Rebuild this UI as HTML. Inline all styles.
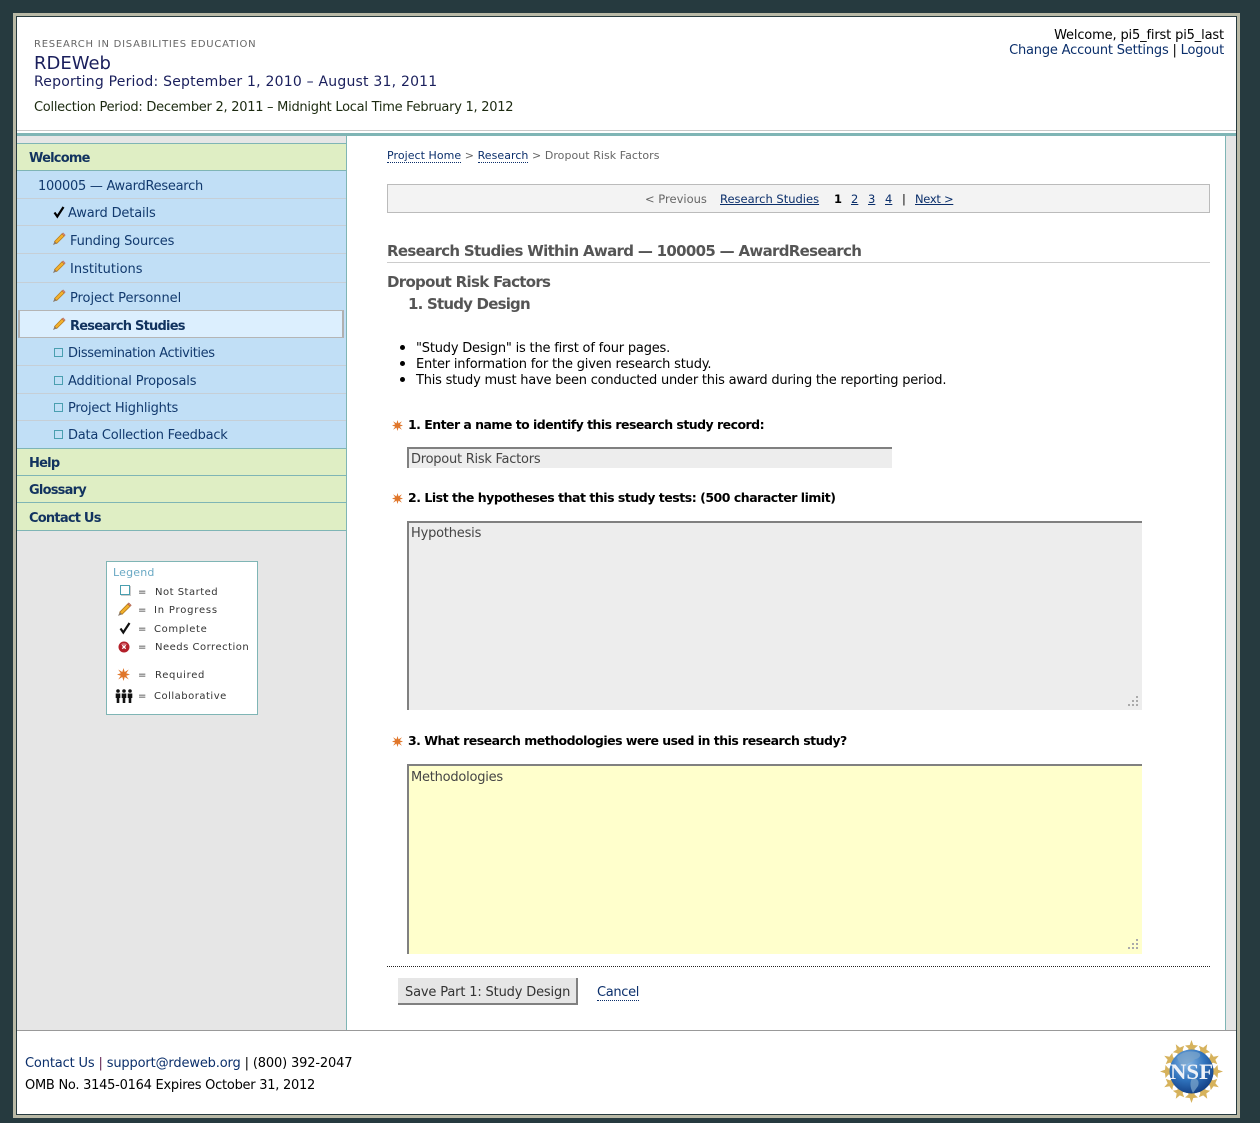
<!DOCTYPE html>
<html><head><meta charset="utf-8"><title>RDEWeb</title>
<style>
html,body{margin:0;padding:0;background:#263a3f}
body{position:relative;width:1260px;height:1123px;overflow:hidden;font-family:"DejaVu Sans","Liberation Sans",sans-serif;font-size:13px;color:#000}
.b{position:absolute}
.t{position:absolute;white-space:nowrap;line-height:16px;height:16px}
a{color:#0b2f6b;text-decoration:none}
.dl{border-bottom:1px dotted #0b2f6b;line-height:13px;display:inline-block}
.u{text-decoration:underline}
.n{color:#123a6e}
.g{font-weight:bold;color:#12335f;letter-spacing:-.78px}
.h{font-weight:bold;color:#555;letter-spacing:-.7px}
.q{font-weight:bold;color:#000;font-size:12.500px}
.l{font-size:10px;color:#333;letter-spacing:.5px}
svg{position:absolute;overflow:visible}
</style></head><body>
<div class="b" style="left:13px;top:13px;width:1227px;height:1105px;background:#b9b9a6"></div>
<div class="b" style="left:16px;top:16px;width:1221px;height:1099px;background:#263a3f"></div>
<div class="b" style="left:17px;top:17px;width:1219px;height:1097px;background:#fff"></div>
<div class="b" style="left:17px;top:130px;width:1219px;height:1px;background:#c8c8c8"></div>
<div class="b" style="left:17px;top:133px;width:1219px;height:3px;background:#7fb5b5"></div>
<div class="b" style="left:17px;top:136px;width:329px;height:894px;background:#e6e6e6"></div>
<div class="b" style="left:346px;top:136px;width:1px;height:894px;background:#7fb5b5"></div>
<div class="b" style="left:1225px;top:136px;width:1px;height:894px;background:#7fb5b5"></div>
<div class="b" style="left:1226px;top:136px;width:10px;height:894px;background:#e6e6e6"></div>
<div class="b" style="left:17px;top:1030px;width:1219px;height:1px;background:#999"></div>

<span class="t" style="left:34px;top:37px;font-size:10px;color:#666;letter-spacing:.76px">RESEARCH IN DISABILITIES EDUCATION</span>
<span class="t" style="left:34px;top:55px;font-size:18px;line-height:18px;height:18px;color:#1a1f5c">RDEWeb</span>
<span class="t" style="left:34px;top:74px;font-size:14px;color:#1a1f5c;letter-spacing:.21px">Reporting Period: September 1, 2010 – August 31, 2011</span>
<span class="t" style="left:34px;top:100px;color:#1c2a10;letter-spacing:-.27px">Collection Period: December 2, 2011 – Midnight Local Time February 1, 2012</span>
<span class="t" style="right:36px;top:28px;letter-spacing:-.15px">Welcome, pi5_first pi5_last</span>
<span class="t" style="right:36px;top:43px;letter-spacing:-.19px"><a>Change Account Settings</a> | <a>Logout</a></span>

<!-- sidebar -->
<div class="b" style="left:17px;top:143px;width:329px;height:26px;background:#dfeec4;border-top:1px solid #7fb5b5;border-bottom:1px solid #7fb5b5"></div>
<div class="b" style="left:17px;top:171px;width:329px;height:277px;background:#c1dff6"></div>
<div class="b" style="left:17px;top:198px;width:329px;height:1px;background:#c6cfd6"></div>
<div class="b" style="left:17px;top:225px;width:329px;height:1px;background:#c6cfd6"></div>
<div class="b" style="left:17px;top:253px;width:329px;height:1px;background:#c6cfd6"></div>
<div class="b" style="left:17px;top:282px;width:329px;height:1px;background:#c6cfd6"></div>
<div class="b" style="left:18px;top:310px;width:326px;height:28px;background:#dceffe;border:1px solid #b5b5b5;border-left:2px solid #b0b0b0;border-right:2px solid #b0b0b0;box-sizing:border-box"></div>
<div class="b" style="left:17px;top:365px;width:329px;height:1px;background:#c6cfd6"></div>
<div class="b" style="left:17px;top:393px;width:329px;height:1px;background:#c6cfd6"></div>
<div class="b" style="left:17px;top:420px;width:329px;height:1px;background:#c6cfd6"></div>
<div class="b" style="left:17px;top:448px;width:329px;height:83px;background:#dfeec4"></div>
<div class="b" style="left:17px;top:448px;width:329px;height:1px;background:#7fb5b5"></div>
<div class="b" style="left:17px;top:475px;width:329px;height:1px;background:#7fb5b5"></div>
<div class="b" style="left:17px;top:502px;width:329px;height:1px;background:#7fb5b5"></div>
<div class="b" style="left:17px;top:530px;width:329px;height:1px;background:#7fb5b5"></div>

<span class="t g" style="left:29px;top:151px">Welcome</span>
<span class="t n" style="left:38px;top:179px;letter-spacing:-.27px">100005 — AwardResearch</span>
<svg style="left:53px;top:206px" width="12" height="12" viewBox="0 0 12 12"><path d="M1.500 6.500 L4.300 10.500 L10.500 1" fill="none" stroke="#000" stroke-width="2.200"/></svg>
<span class="t n" style="left:68px;top:206px;letter-spacing:-.15px">Award Details</span>
<svg style="left:52px;top:232px" width="14" height="14" viewBox="0 0 14 14"><use href="#pc"/></svg>
<span class="t n" style="left:70px;top:234px;letter-spacing:-.2px">Funding Sources</span>
<svg style="left:52px;top:260px" width="14" height="14" viewBox="0 0 14 14"><use href="#pc"/></svg>
<span class="t n" style="left:70px;top:262px">Institutions</span>
<svg style="left:52px;top:289px" width="14" height="14" viewBox="0 0 14 14"><use href="#pc"/></svg>
<span class="t n" style="left:70px;top:291px;letter-spacing:-.06px">Project Personnel</span>
<svg style="left:52px;top:317px" width="14" height="14" viewBox="0 0 14 14"><use href="#pc"/></svg>
<span class="t g" style="left:70px;top:319px">Research Studies</span>
<div class="b" style="left:54px;top:348px;width:7px;height:7px;border:1px solid #4a9fb0"></div>
<span class="t n" style="left:68px;top:346px;letter-spacing:-.39px">Dissemination Activities</span>
<div class="b" style="left:54px;top:376px;width:7px;height:7px;border:1px solid #4a9fb0"></div>
<span class="t n" style="left:68px;top:374px;letter-spacing:-.15px">Additional Proposals</span>
<div class="b" style="left:54px;top:403px;width:7px;height:7px;border:1px solid #4a9fb0"></div>
<span class="t n" style="left:68px;top:401px;letter-spacing:-.22px">Project Highlights</span>
<div class="b" style="left:54px;top:430px;width:7px;height:7px;border:1px solid #4a9fb0"></div>
<span class="t n" style="left:68px;top:428px;letter-spacing:-.25px">Data Collection Feedback</span>
<span class="t g" style="left:29px;top:456px">Help</span>
<span class="t g" style="left:29px;top:483px">Glossary</span>
<span class="t g" style="left:29px;top:511px">Contact Us</span>

<!-- legend -->
<div class="b" style="left:106px;top:561px;width:150px;height:152px;background:#fff;border:1px solid #7fb5b5"></div>
<span class="t" style="left:113px;top:565px;font-size:11px;color:#6aa9c4;letter-spacing:.2px">Legend</span>
<div class="b" style="left:120px;top:585px;width:8px;height:8px;border:1px solid #4a9fb0;box-shadow:1px 1px 0 #ccc"></div>
<span class="t l" style="left:138px;top:585px">=</span><span class="t l" style="left:155px;top:585px">Not Started</span>
<svg style="left:117px;top:602px" width="15" height="15" viewBox="0 0 14 14"><use href="#pc"/></svg>
<span class="t l" style="left:138px;top:603px">=</span><span class="t l" style="left:154px;top:603px;letter-spacing:.8px">In Progress</span>
<svg style="left:119px;top:622px" width="12" height="12" viewBox="0 0 12 12"><path d="M1.500 6.500 L4.300 10.500 L10.500 1" fill="none" stroke="#111" stroke-width="2.200"/></svg>
<span class="t l" style="left:138px;top:622px">=</span><span class="t l" style="left:154px;top:622px;letter-spacing:.65px">Complete</span>
<svg style="left:118px;top:641px" width="12" height="12" viewBox="0 0 12 12"><circle cx="6" cy="6" r="5.500" fill="#b3202a"/><path d="M2.500 3.500 A5 5 0 0 1 9.500 3.500 L6 4.500Z" fill="#d9707a"/><path d="M4.300 4.300 L7.700 7.700 M7.700 4.300 L4.300 7.700" stroke="#fff" stroke-width="1.300"/></svg>
<span class="t l" style="left:138px;top:640px">=</span><span class="t l" style="left:155px;top:640px">Needs Correction</span>
<svg style="left:117px;top:668px" width="13" height="13" viewBox="0 0 13 13"><use href="#st"/></svg>
<span class="t l" style="left:138px;top:668px">=</span><span class="t l" style="left:155px;top:668px;letter-spacing:.7px">Required</span>
<svg style="left:115px;top:689px" width="18" height="14" viewBox="0 0 18 14"><g fill="#111"><circle cx="3" cy="2" r="1.800"/><path d="M.7 4.500h4.600v4.500H4.300v5H1.700V9H.7z"/><circle cx="9" cy="2" r="1.800"/><path d="M6.700 4.500h4.600v4.500h-1v5H7.700V9h-1z"/><circle cx="15" cy="2" r="1.800"/><path d="M12.700 4.500h4.600v4.500h-1v5h-2.600V9h-1z"/></g></svg>
<span class="t l" style="left:138px;top:689px">=</span><span class="t l" style="left:154px;top:689px">Collaborative</span>

<!-- content -->
<span class="t" style="left:387px;top:148px;font-size:11px;color:#666;letter-spacing:.05px"><a class="dl">Project Home</a> &gt; <a class="dl">Research</a> &gt; Dropout Risk Factors</span>

<div class="b" style="left:387px;top:184px;width:823px;height:29px;background:#f3f3f3;border:1px solid #bbb;box-sizing:border-box"></div>
<span class="t" style="left:645px;top:191px;font-size:11.500px;color:#666">&lt; Previous</span>
<a class="t u" style="left:720px;top:191px;font-size:11.500px">Research Studies</a>
<span class="t" style="left:834px;top:191px;font-size:11.500px;font-weight:bold">1</span>
<a class="t u" style="left:851px;top:191px;font-size:11.500px">2</a>
<a class="t u" style="left:868px;top:191px;font-size:11.500px">3</a>
<a class="t u" style="left:885px;top:191px;font-size:11.500px">4</a>
<span class="t" style="left:902px;top:191px;font-size:11.500px">|</span>
<a class="t u" style="left:915px;top:191px;font-size:11.500px;letter-spacing:-.3px">Next &gt;</a>

<span class="t h" style="left:387px;top:243px;font-size:15px;letter-spacing:-.69px">Research Studies Within Award — 100005 — AwardResearch</span>
<div class="b" style="left:387px;top:262px;width:823px;height:1px;background:#ccc"></div>
<span class="t h" style="left:387px;top:274px;font-size:15px">Dropout Risk Factors</span>
<span class="t h" style="left:408px;top:296px;font-size:15px;letter-spacing:-.8px">1. Study Design</span>

<div class="b" style="left:400px;top:345px;width:5px;height:5px;border-radius:50%;background:#000"></div>
<div class="b" style="left:400px;top:361px;width:5px;height:5px;border-radius:50%;background:#000"></div>
<div class="b" style="left:400px;top:377px;width:5px;height:5px;border-radius:50%;background:#000"></div>
<span class="t" style="left:416px;top:341px;letter-spacing:-.2px">"Study Design" is the first of four pages.</span>
<span class="t" style="left:416px;top:357px;letter-spacing:-.19px">Enter information for the given research study.</span>
<span class="t" style="left:416px;top:373px;letter-spacing:-.22px">This study must have been conducted under this award during the reporting period.</span>

<svg style="left:392px;top:420px" width="11" height="11" viewBox="0 0 13 13"><use href="#st"/></svg>
<span class="t q" style="left:408px;top:417px;letter-spacing:-.53px">1. Enter a name to identify this research study record:</span>
<div class="b" style="left:407px;top:447px;width:485px;height:21px;background:#ededed;border-top:2px solid #808080;border-left:2px solid #808080;box-sizing:border-box"></div>
<span class="t" style="left:411px;top:452px;color:#444;letter-spacing:-.25px">Dropout Risk Factors</span>

<svg style="left:392px;top:493px" width="11" height="11" viewBox="0 0 13 13"><use href="#st"/></svg>
<span class="t q" style="left:408px;top:490px;letter-spacing:-.48px">2. List the hypotheses that this study tests: (500 character limit)</span>
<div class="b" style="left:407px;top:521px;width:735px;height:189px;background:#ededed;border-top:2px solid #808080;border-left:2px solid #808080;box-sizing:border-box"></div>
<span class="t" style="left:411px;top:526px;color:#444;letter-spacing:-.2px">Hypothesis</span>
<svg style="left:1128px;top:696px" width="10" height="10" viewBox="0 0 10 10"><g fill="#aaa"><rect x="8" y="0" width="2" height="2"/><rect x="4" y="4" width="2" height="2"/><rect x="8" y="4" width="2" height="2"/><rect x="0" y="8" width="2" height="2"/><rect x="4" y="8" width="2" height="2"/><rect x="8" y="8" width="2" height="2"/></g></svg>

<svg style="left:392px;top:736px" width="11" height="11" viewBox="0 0 13 13"><use href="#st"/></svg>
<span class="t q" style="left:408px;top:733px;letter-spacing:-.52px">3. What research methodologies were used in this research study?</span>
<div class="b" style="left:407px;top:764px;width:735px;height:190px;background:#ffffcc;border-top:2px solid #808080;border-left:2px solid #808080;box-sizing:border-box"></div>
<span class="t" style="left:411px;top:770px;color:#444;letter-spacing:-.23px">Methodologies</span>
<svg style="left:1128px;top:939px" width="10" height="10" viewBox="0 0 10 10"><g fill="#aaa"><rect x="8" y="0" width="2" height="2"/><rect x="4" y="4" width="2" height="2"/><rect x="8" y="4" width="2" height="2"/><rect x="0" y="8" width="2" height="2"/><rect x="4" y="8" width="2" height="2"/><rect x="8" y="8" width="2" height="2"/></g></svg>

<div class="b" style="left:387px;top:966px;width:823px;height:0;border-top:1px dotted #222"></div>
<div class="b" style="left:398px;top:978px;width:180px;height:27px;background:#e6e6e6;border-right:2px solid #808080;border-bottom:2px solid #808080;box-sizing:border-box"></div>
<span class="t" style="left:405px;top:985px;color:#333;letter-spacing:-.16px">Save Part 1: Study Design</span>
<a class="t" style="left:597px;top:985px;height:16px;letter-spacing:-.33px"><span class="dl" style="line-height:15px">Cancel</span></a>

<!-- footer -->
<span class="t" style="left:25px;top:1056px;letter-spacing:-.15px"><a>Contact Us</a> <span style="color:#602050">|</span> <a>support@rdeweb.org</a> | (800) 392-2047</span>
<span class="t" style="left:25px;top:1078px;letter-spacing:-.26px">OMB No. 3145-0164 Expires October 31, 2012</span>

<svg style="left:1160px;top:1040px" width="64" height="64" viewBox="0 0 64 64">
<defs><radialGradient id="gl" cx="40%" cy="30%" r="80%"><stop offset="0" stop-color="#8dbbe6"/><stop offset=".5" stop-color="#2f72bc"/><stop offset="1" stop-color="#0c3377"/></radialGradient>
<path id="ray" d="M31.500 0 L33.300 5 L38 5.500 L34.500 8.500 L35.500 13 L31.500 10.500 L27.500 13 L28.500 8.500 L25 5.500 L29.700 5 Z" fill="#d6b25c"/></defs>
<use href="#ray"/><use href="#ray" transform="rotate(30 31.500 31.500)"/><use href="#ray" transform="rotate(60 31.500 31.500)"/><use href="#ray" transform="rotate(90 31.500 31.500)"/><use href="#ray" transform="rotate(120 31.500 31.500)"/><use href="#ray" transform="rotate(150 31.500 31.500)"/><use href="#ray" transform="rotate(180 31.500 31.500)"/><use href="#ray" transform="rotate(210 31.500 31.500)"/><use href="#ray" transform="rotate(240 31.500 31.500)"/><use href="#ray" transform="rotate(270 31.500 31.500)"/><use href="#ray" transform="rotate(300 31.500 31.500)"/><use href="#ray" transform="rotate(330 31.500 31.500)"/>
<circle cx="31.500" cy="31.500" r="22" fill="url(#gl)"/>
<path d="M17 17c6-6 15-7 22-4 3 2 0 6-4 6-3 4-9 4-11 8-3-2-6-6-7-10zM32 38c5 0 8 3 6 8l-5 7c-2-4-4-9-1-15z" fill="#7aa3c9" opacity=".75"/>
<text x="31.500" y="39" text-anchor="middle" font-family="Liberation Serif,serif" font-size="22" font-weight="bold" fill="#eef2f8" textLength="43" lengthAdjust="spacingAndGlyphs">NSF</text>
</svg>

<svg width="0" height="0" style="left:0;top:0"><defs>
<g id="pc"><path d="M2.500 9.500 L10 1.800 L12.300 4 L4.700 11.500 Z" fill="#f2b02c" stroke="#b47a1c" stroke-width=".7"/><path d="M10 1.800 L11 .8 L13.300 3 L12.300 4 Z" fill="#e08a7a" stroke="#a05a40" stroke-width=".5"/><path d="M2.500 9.500 L1 13 L4.700 11.500 Z" fill="#8a7a6a"/></g>
<g id="st"><path d="M6.500 0 L7.700 4 L11.800 1.500 L9.200 5.200 L13 6.500 L9.200 7.800 L11.800 11.500 L7.700 9 L6.500 13 L5.300 9 L1.200 11.500 L3.800 7.800 L0 6.500 L3.800 5.200 L1.200 1.500 L5.300 4 Z" fill="#e0762a"/></g>
</defs></svg>
</body></html>
